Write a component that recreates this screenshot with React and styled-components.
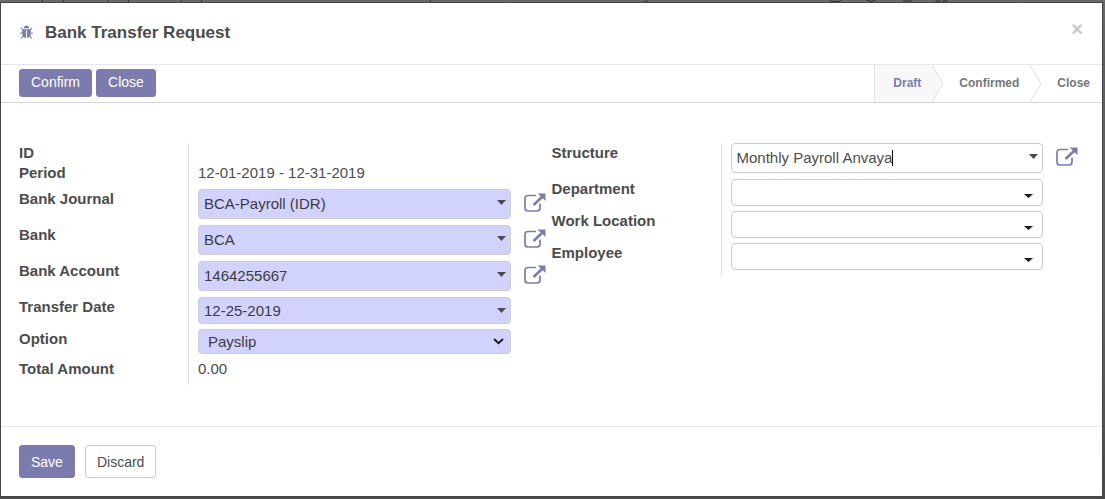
import React, { useState } from "react";
import styled, { createGlobalStyle, css } from "styled-components";

const purple = "#7c7bad";

const GlobalStyle = createGlobalStyle`
  *, *::before, *::after { box-sizing: border-box; }
  html { background: #5a5a5b; }
  body {
    margin: 0;
    font-family: "Liberation Sans", Arial, sans-serif;
    font-size: 15px;
    line-height: 20px;
    color: #4c4c4c;
  }
  button, input, select { font-family: inherit; margin: 0; }
`;

const Backdrop = styled.div`
  position: relative;
  display: flex;
  flex-direction: column;
  min-height: 100vh;
  padding: 3px 3px 3px 1px;
  background: linear-gradient(#6b6b6b 0, #5f5f60 60px, #5f5f60 60%, #4b4b4d 100%);
`;

const PageBehind = styled.svg`
  position: absolute;
  top: 0;
  left: 0;
`;

const Dialog = styled.section`
  position: relative;
  flex: 1;
  display: flex;
  flex-direction: column;
  background: #fff;
  box-shadow: 0 0 0 1px #454546;
`;

const Header = styled.header`
  display: flex;
  align-items: center;
  height: 62px;
  padding: 0 19px 2px 18px;
  border-bottom: 1px solid #e5e5e5;
`;

const BugIcon = styled.svg`
  flex: none;
  margin-right: 11px;
  fill: ${purple};
`;

const Title = styled.h1`
  flex: 1;
  margin: 0;
  font-size: 17px;
  line-height: 24px;
  font-weight: bold;
`;

const Dismiss = styled.button`
  border: 0;
  padding: 0 0 8px;
  background: none;
  color: #c8c8c8;
  font-size: 20px;
  line-height: 20px;
  font-weight: bold;
`;

const StatusBar = styled.div`
  display: flex;
  align-items: stretch;
  justify-content: space-between;
  height: 38px;
  padding-left: 18px;
  border-bottom: 1px solid #d5d5d5;
`;

const Actions = styled.div`
  display: flex;
  align-items: center;
  gap: 4px;
  padding-bottom: 1px;
`;

const Button = styled.button`
  height: ${(p) => (p.$large ? 33 : 28)}px;
  padding: 0 11px ${(p) => (p.$large ? 0 : 2)}px;
  border: 1px solid ${(p) => (p.$plain ? "#ccc" : purple)};
  border-radius: 3px;
  background: ${(p) => (p.$plain ? "#fff" : purple)};
  color: ${(p) => (p.$plain ? "#4c4c4c" : "#fff")};
  font-size: 14px;
  line-height: 20px;
`;

const Steps = styled.ol`
  display: flex;
  margin: 0;
  padding: 0;
  list-style: none;
  border-left: 1px solid #e2e2e2;
`;

const Step = styled.li`
  display: flex;
  align-items: center;
  padding: 0 ${(p) => (p.$last ? 12 : 0)}px 0 ${(p) => (p.$active ? 18 : 15)}px;
  background: ${(p) => (p.$active ? "#f8f8f8" : "#fff")};
  color: ${(p) => (p.$active ? purple : "#777")};
  font-size: 12px;
  font-weight: bold;
`;

const StepName = styled.span`
  padding-bottom: 2px;
`;

const StepArrow = styled.svg`
  display: block;
  margin-left: 11px;
  background: #fff;
`;

const Sheet = styled.main`
  flex: 1;
  display: grid;
  grid-template-columns: 1fr 1fr;
  align-items: start;
  padding: 40px 18px;
`;

const Row = styled.div`
  display: flex;
  min-height: ${(p) => p.$height}px;
`;

const Label = styled.label`
  flex: none;
  width: 169px;
  font-weight: bold;
`;

const Cell = styled.div`
  flex: 1;
  display: flex;
  align-items: flex-start;
  border-left: 1px solid #ddd;
  padding: 0 6px 0 9px;
`;

const Output = styled.output`
  display: block;
`;

const Control = styled.div`
  position: relative;
  flex: 1;
  display: flex;
  margin-right: 35px;
`;

const box = css`
  width: 100%;
  height: ${(p) => p.$height}px;
  border: 1px solid #ccc;
  border-radius: 4px;
  background: ${(p) => (p.$required ? "#d2d2ff" : "#fff")};
  color: ${(p) => (p.$required ? "#3c3c3c" : "#4c4c4c")};
  font-size: 15px;
  outline: none;
`;

const Input = styled.input`
  ${box}
  padding: 0 24px ${(p) => (p.$height > 28 ? 2 : 0)}px 5px;
`;

const Select = styled.select`
  ${box}
  appearance: none;
  padding: 0 24px 0 9px;
`;

const Mark = styled.svg`
  position: absolute;
  top: ${(p) => p.$top}px;
  right: ${(p) => p.$right}px;
  pointer-events: none;
`;

const TextCursor = styled.span`
  position: absolute;
  top: 7px;
  left: 161px;
  width: 1px;
  height: 16px;
  background: #000;
`;

const OpenLink = styled.a`
  flex: none;
  width: 22px;
  height: 22px;
  margin: 4px 0 0 -22px;
  color: ${purple};
`;

const Footer = styled.footer`
  display: flex;
  gap: 10px;
  padding: 18px;
  border-top: 1px solid #e5e5e5;
`;

function Bug() {
  return (
    <BugIcon width="15" height="15" viewBox="-64 0 1792 1792" aria-hidden="true">
      <path d="M1632 960q0 26-19 45t-45 19h-224q0 171-67 290l208 209q19 19 19 45t-19 45q-18 19-45 19t-45-19l-198-197q-5 5-15 13t-42 28.500-65 36.500-82 29-97 13v-896h-128v896q-51 0-101.500-13.500t-87-33-66-39-43.500-32.500l-15-14-183 207q-20 21-48 21-24 0-43-16-19-18-20.500-44.500t15.500-46.500l202-227q-58-114-58-274h-224q-26 0-45-19t-19-45 19-45 45-19h224v-294l-173-173q-19-19-19-45t19-45 45-19 45 19l173 173h844l173-173q19-19 45-19t45 19 19 45-19 45l-173 173v294h224q26 0 45 19t19 45zM1152 384h-640q0-133 93.500-226.500t226.500-93.500 226.500 93.500 93.500 226.500z" />
    </BugIcon>
  );
}

function External() {
  return (
    <svg width="22" height="20" viewBox="0 0 22 20" fill="none" stroke="currentColor">
      <path d="M12 2.500H4Q1 2.500 1 5.500V15Q1 18 4 18H13Q16 18 16 15V10.500" strokeWidth="1.700" />
      <path d="M9.500 12L18 4" strokeWidth="2.600" />
      <path d="M13.500 0.500H21.500V8Z" fill="currentColor" stroke="none" />
    </svg>
  );
}

function Caret() {
  return (
    <Mark $top={11} $right={5} width="9" height="5" viewBox="0 0 9 5">
      <path d="M0 0H9L4.500 5Z" fill="#4c4c4c" />
    </Mark>
  );
}

function TextRow({ id, label, value, height }) {
  return (
    <Row $height={height}>
      <Label htmlFor={id}>{label}</Label>
      <Cell>
        <Output id={id}>{value}</Output>
      </Cell>
    </Row>
  );
}

function InputRow({ id, label, initial = "", required, link, typing, tags }) {
  const [value, setValue] = useState(initial);
  return (
    <Row $height={link ? 36 : 32}>
      <Label htmlFor={id}>{label}</Label>
      <Cell>
        <Control>
          <Input
            id={id}
            $height={link ? 30 : 27}
            $required={required}
            value={value}
            onChange={(e) => setValue(e.target.value)}
          />
          {typing && <TextCursor />}
          {tags ? (
            <Mark $top={15} $right={10} width="9" height="4" viewBox="0 0 9 4">
              <path d="M0 0H9L4.500 4Z" fill="#1c1c1c" />
            </Mark>
          ) : (
            <Caret />
          )}
        </Control>
        {link && (
          <OpenLink href="#" aria-label={`Open ${label}`}>
            <External />
          </OpenLink>
        )}
      </Cell>
    </Row>
  );
}

export default function App() {
  return (
    <>
      <GlobalStyle />
      <Backdrop>
        <PageBehind width="1020" height="3" viewBox="0 0 1020 3" fill="none" stroke="#333" aria-hidden="true">
          <path d="M42.500 0V3M128.500 0V3M201.500 0V3M430.500 0V3M64 0L62 3M109 0L107 3M182 0L180 3M1034 0L1032 3" />
          <path d="M643 2H646L648 0M829 0L831 1.500H839L841 0M866 0Q871 3 876 0M903 1H912M936 3V1H940V3M943 3V1H947V3" />
        </PageBehind>
        <Dialog role="dialog" aria-labelledby="title">
          <Header>
            <Bug />
            <Title id="title">Bank Transfer Request</Title>
            <Dismiss aria-label="Dismiss">×</Dismiss>
          </Header>
          <StatusBar>
            <Actions>
              <Button>Confirm</Button>
              <Button>Close</Button>
            </Actions>
            <Steps>
              <Step $active>
                <StepName>Draft</StepName>
                <StepArrow width="12" height="37" viewBox="0 0 12 37">
                  <path d="M0 0L11 18.500L0 37Z" fill="#f8f8f8" />
                  <path d="M0 0L11 18.500L0 37" fill="none" stroke="#ddd" />
                </StepArrow>
              </Step>
              <Step>
                <StepName>Confirmed</StepName>
                <StepArrow width="12" height="37" viewBox="0 0 12 37">
                  <path d="M0 0L11 18.500L0 37" fill="none" stroke="#ddd" />
                </StepArrow>
              </Step>
              <Step $last>
                <StepName>Close</StepName>
              </Step>
            </Steps>
          </StatusBar>
          <Sheet>
            <div>
              <TextRow id="ref" label="ID" value="" height={20} />
              <TextRow id="period" label="Period" value="12-01-2019 - 12-31-2019" height={26} />
              <InputRow id="journal" label="Bank Journal" initial="BCA-Payroll (IDR)" required link />
              <InputRow id="bank" label="Bank" initial="BCA" required link />
              <InputRow id="account" label="Bank Account" initial="1464255667" required link />
              <InputRow id="date" label="Transfer Date" initial="12-25-2019" required />
              <Row $height={30}>
                <Label htmlFor="option">Option</Label>
                <Cell>
                  <Control>
                    <Select id="option" $height={25} $required defaultValue="Payslip">
                      <option>Payslip</option>
                    </Select>
                    <Mark $top={9} $right={7} width="11" height="7" viewBox="0 0 11 7">
                      <path d="M1 1L5.500 5.200L10 1" fill="none" stroke="#1c1c1c" strokeWidth="2" />
                    </Mark>
                  </Control>
                </Cell>
              </Row>
              <TextRow id="total" label="Total Amount" value="0.00" height={26} />
            </div>
            <div>
              <InputRow id="structure" label="Structure" initial="Monthly Payroll Anvaya" link typing />
              <InputRow id="department" label="Department" tags />
              <InputRow id="location" label="Work Location" tags />
              <InputRow id="employee" label="Employee" tags />
            </div>
          </Sheet>
          <Footer>
            <Button $large>Save</Button>
            <Button $large $plain>Discard</Button>
          </Footer>
        </Dialog>
      </Backdrop>
    </>
  );
}
